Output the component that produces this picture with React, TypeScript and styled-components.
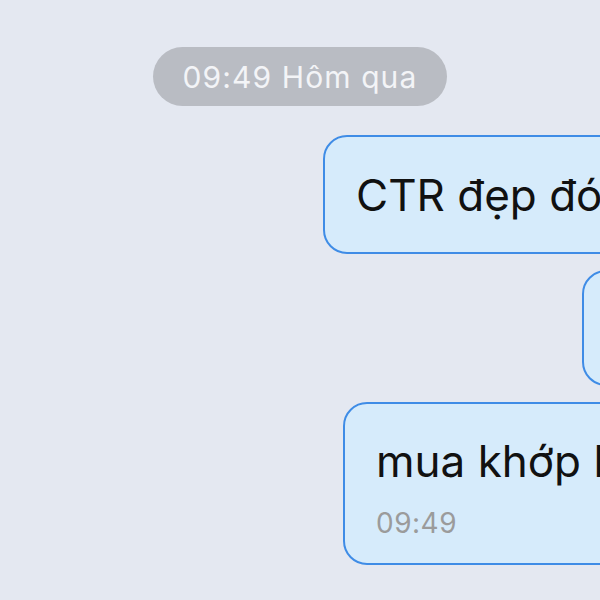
import * as React from 'react';
import styled, { createGlobalStyle } from 'styled-components';

const GlobalStyle = createGlobalStyle`
  html, body {
    margin: 0;
    padding: 0;
    background: #e4e8f1;
    overflow: hidden;
  }
  body {
    font-family: Inter, "Noto Sans", "Liberation Sans", sans-serif;
  }
`;

const Thread = styled.div`
  width: 600px;
  height: 600px;
  overflow: hidden;
  display: flex;
  flex-direction: column;
  padding-top: 47px;
  box-sizing: border-box;
`;

const DateRow = styled.div`
  display: flex;
  justify-content: center;
  margin-bottom: 29px;
`;

const DatePill = styled.div`
  height: 59px;
  width: 294px;
  border-radius: 30px;
  background: #b9bcc3;
  color: #f3f4f7;
  font-size: 30px;
  display: flex;
  align-items: center;
  justify-content: center;
  letter-spacing: 1.1px;
`;

const Messages = styled.div`
  display: flex;
  flex-direction: column;
  gap: 16px;
`;

const Row = styled.div<{ $offset: number }>`
  display: flex;
  padding-left: ${(p) => p.$offset}px;
`;

const Bubble = styled.div<{ $height: number; $stacked?: boolean }>`
  flex: 0 0 auto;
  min-width: 500px;
  height: ${(p) => p.$height}px;
  box-sizing: border-box;
  background: #d6ebfb;
  border: 2.5px solid #3f8ce6;
  border-radius: 24px;
  padding: ${(p) => (p.$stacked ? '31px 31px 0' : '0 31px')};
  display: flex;
  flex-direction: column;
  justify-content: ${(p) => (p.$stacked ? 'flex-start' : 'center')};
  white-space: nowrap;
`;

const Text = styled.div`
  font-size: 44px;
  line-height: 52px;
  color: #111;
`;

const Time = styled.div`
  font-size: 28px;
  line-height: 34px;
  color: #9b9b9b;
  margin-top: 19px;
  letter-spacing: 0.5px;
`;

type Message = { offset: number; height: number; text: string; time?: string };

const messages: Message[] = [
  { offset: 323, height: 119, text: 'CTR đẹp đó em' },
  { offset: 582, height: 116, text: 'ok anh' },
  { offset: 343, height: 163, text: 'mua khớp lệnh', time: '09:49' },
];

export default function App() {
  return (
    <>
      <GlobalStyle />
      <Thread>
        <DateRow>
          <DatePill>09:49 Hôm qua</DatePill>
        </DateRow>
        <Messages>
          {messages.map((m, i) => (
            <Row key={i} $offset={m.offset}>
              <Bubble $height={m.height} $stacked={!!m.time}>
                <Text>{m.text}</Text>
                {m.time && <Time>{m.time}</Time>}
              </Bubble>
            </Row>
          ))}
        </Messages>
      </Thread>
    </>
  );
}
